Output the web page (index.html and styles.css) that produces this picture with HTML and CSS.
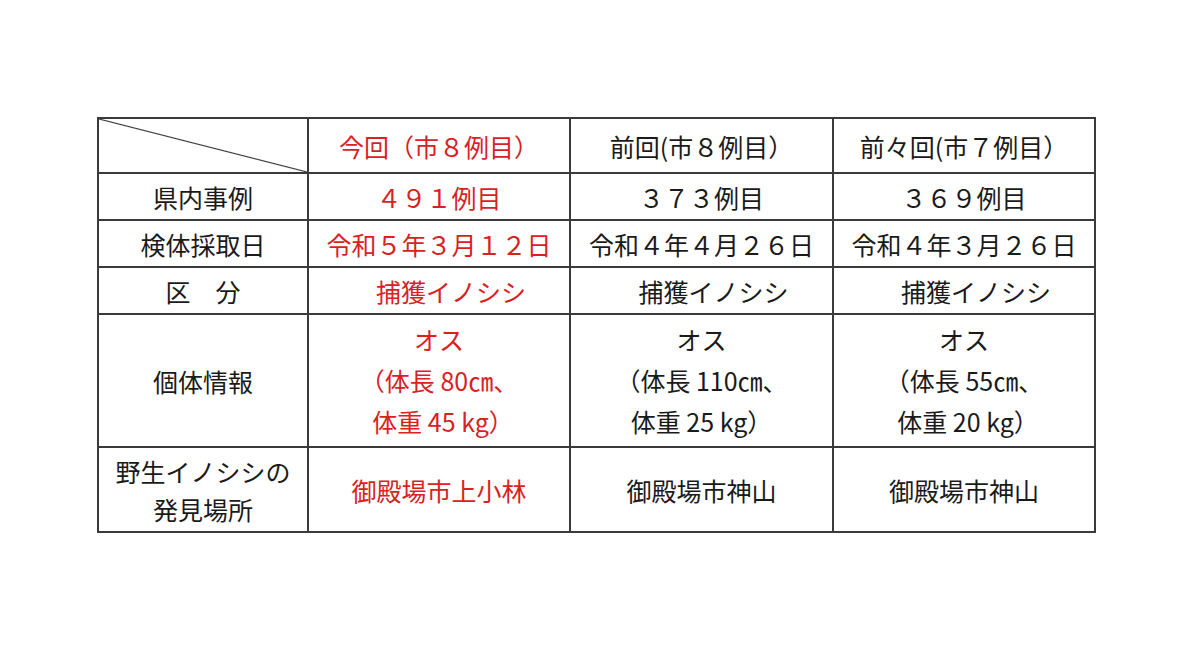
FILE: index.html
```html
<!DOCTYPE html>
<html lang="ja">
<head>
<meta charset="utf-8">
<title>表</title>
<link rel="stylesheet" href="styles.css">
</head>
<body>
<div class="page">
<table class="cases">
  <colgroup>
    <col class="c1"><col class="c2"><col class="c3"><col class="c4">
  </colgroup>
  <tr class="r1">
    <td class="diag"></td>
    <td class="red">今回（市８例目）</td>
    <td>前回(市８例目）</td>
    <td>前々回(市７例目）</td>
  </tr>
  <tr class="r2">
    <td>県内事例</td>
    <td class="red">４９１例目</td>
    <td>３７３例目</td>
    <td>３６９例目</td>
  </tr>
  <tr class="r3">
    <td>検体採取日</td>
    <td class="red">令和５年３月１２日</td>
    <td>令和４年４月２６日</td>
    <td>令和４年３月２６日</td>
  </tr>
  <tr class="r4">
    <td>区　分</td>
    <td class="red shift">捕獲イノシシ</td>
    <td class="shift">捕獲イノシシ</td>
    <td class="shift">捕獲イノシシ</td>
  </tr>
  <tr class="r5">
    <td>個体情報</td>
    <td class="red multi">オス<br>（体長 80㎝、<br><span class="ind">体重 45 kg）</span></td>
    <td class="multi">オス<br>（体長 110㎝、<br>体重 25 kg）</td>
    <td class="multi">オス<br>（体長 55㎝、<br><span class="ind">体重 20 kg）</span></td>
  </tr>
  <tr class="r6">
    <td class="two">野生イノシシの<br>発見場所</td>
    <td class="red">御殿場市上小林</td>
    <td>御殿場市神山</td>
    <td>御殿場市神山</td>
  </tr>
</table>
</div>
</body>
</html>
```

FILE: styles.css
```css
html, body {
  margin: 0;
  padding: 0;
  background: #ffffff;
}

.page {
  padding: 117px 0 0 97px;
}

.cases {
  border-collapse: collapse;
  table-layout: fixed;
  width: 997px;
  font-family: "Noto Sans CJK JP", "Noto Sans", sans-serif;
  font-size: 25px;
  color: #1a1a1a;
}

.c1 { width: 210px; }
.c2 { width: 262px; }
.c3 { width: 263px; }
.c4 { width: 262px; }

.cases td {
  border: 2px solid #3a3a3a;
  text-align: center;
  vertical-align: middle;
  padding: 0;
  line-height: 1.2;
  white-space: nowrap;
}

.r1 td { height: 53px; }
.r2 td, .r3 td, .r4 td { height: 45px; }
.r5 td { height: 131px; }
.r6 td { height: 83px; }

.red { color: #d9221f; }

.shift { padding-left: 24px !important; }

.multi { line-height: 41px !important; }

.ind { padding-left: 8px; }

.two { line-height: 38px !important; }

.diag {
  background: linear-gradient(to top right,
    transparent calc(50% - 1.1px),
    #333333 50%,
    transparent calc(50% + 1.1px));
}
```
